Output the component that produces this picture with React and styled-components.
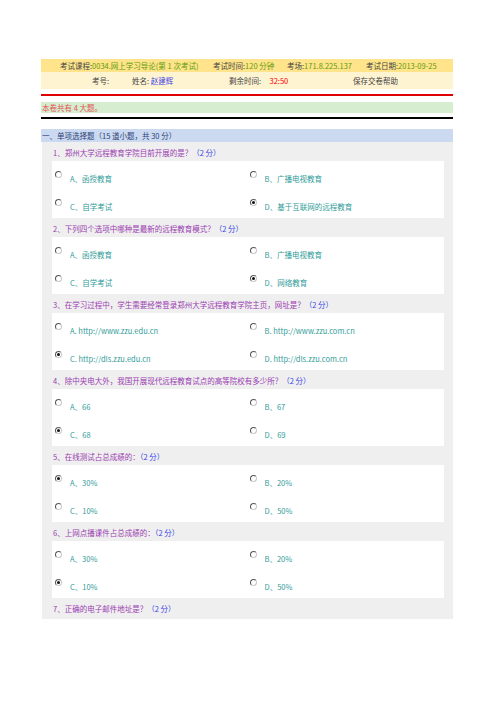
//IMPORTS
import React from 'react'
import styled, { createGlobalStyle } from 'styled-components'

//STYLE
const Global = createGlobalStyle`
  body {
    margin: 0;
    background: #fff;
    font-family: "Noto Sans CJK SC", "Noto Sans", sans-serif;
    font-size: 7.5px;
  }
`

const Page = styled.div`
  width: 412px;
  margin-left: 41px;
  padding-top: 59px;
`

const InfoRow = styled.div`
  display: grid;
  grid-template-columns: ${p => p.$cols};
  align-items: center;
  height: ${p => p.$h}px;
  padding-left: ${p => p.$pad}px;
  background: ${p => p.$bg};
  color: #444;
  line-height: 10px;
  white-space: nowrap;
`

const Val = styled.span`
  color: ${p => p.$color};
`

const Rule = styled.div`
  height: 2px;
  background: ${p => p.$color};
  margin: ${p => p.$m};
`

const Notice = styled.div`
  height: 11px;
  line-height: 11px;
  background: #d6edd0;
  color: #e25555;
  padding-left: 1px;
`

const SectionHead = styled.div`
  height: 13px;
  line-height: 13px;
  background: #cbdaf0;
  color: #2f3f78;
  padding-left: 1px;
`

const Body = styled.div`
  background: #efefef;
  margin-left: 1px;
  padding: 0 9px 2px 10px;
`

const QTitle = styled.div`
  height: 19px;
  box-sizing: border-box;
  padding: 6px 0 0 1px;
  line-height: 10px;
  color: #9b3db2;
`

const Score = styled.span`
  color: #3a45e8;
`

const Options = styled.div`
  background: #fff;
  display: grid;
  grid-template-columns: 1fr 1fr;
  row-gap: 15px;
  padding: 10px 0 6px 3px;
`

const Option = styled.div`
  display: flex;
  align-items: flex-start;
  gap: 8px;
  color: #2f9b98;
  line-height: 10px;
`

const Radio = styled.span`
  position: relative;
  width: 5px;
  height: 5px;
  border: 1px solid;
  border-color: #555 #c8c8c8 #c8c8c8 #555;
  border-radius: 50%;
  background: #fff;
  flex: none;

  &::after {
    content: '';
    display: ${p => (p.$checked ? 'block' : 'none')};
    position: absolute;
    left: 1px;
    top: 1px;
    width: 3px;
    height: 3px;
    border-radius: 50%;
    background: #111;
  }
`

const Label = styled.span`
  margin-top: 3px;
`

//DATA
const questions = [
  {
    t: '1、郑州大学远程教育学院目前开展的是？',
    o: ['A、函授教育', 'B、广播电视教育', 'C、自学考试', 'D、基于互联网的远程教育'],
    c: 3,
  },
  {
    t: '2、下列四个选项中哪种是最新的远程教育模式？',
    o: ['A、函授教育', 'B、广播电视教育', 'C、自学考试', 'D、网络教育'],
    c: 3,
  },
  {
    t: '3、在学习过程中，学生需要经常登录郑州大学远程教育学院主页，网址是？',
    o: ['A. http://www.zzu.edu.cn', 'B. http://www.zzu.com.cn', 'C. http://dls.zzu.edu.cn', 'D. http://dls.zzu.com.cn'],
    c: 2,
  },
  {
    t: '4、除中央电大外，我国开展现代远程教育试点的高等院校有多少所？',
    o: ['A、66', 'B、67', 'C、68', 'D、69'],
    c: 2,
  },
  {
    t: '5、在线测试占总成绩的：',
    o: ['A、30%', 'B、20%', 'C、10%', 'D、50%'],
    c: 0,
  },
  {
    t: '6、上网点播课件占总成绩的：',
    o: ['A、30%', 'B、20%', 'C、10%', 'D、50%'],
    c: 2,
  },
  { t: '7、正确的电子邮件地址是？', o: [] },
]

//MAIN COMPONENT
const App = () => {
  const green = '#5f9c0a'

  return (
    <Page>
      <Global />

      <InfoRow $bg="#ffe48b" $h={13} $pad={19} $cols="153px 74px 79px auto">
        <span>考试课程:<Val $color={green}>0034.网上学习导论(第 1 次考试)</Val></span>
        <span>考试时间:<Val $color={green}>120 分钟</Val></span>
        <span>考场:<Val $color={green}>171.8.225.137</Val></span>
        <span>考试日期:<Val $color={green}>2013-09-25</Val></span>
      </InfoRow>
      <InfoRow $bg="#fff4d2" $h={17} $pad={51} $cols="40px 97px 124px auto">
        <span>考号:</span>
        <span>姓名: <Val $color="#4444e8">赵建辉</Val></span>
        <span>剩余时间: <Val $color="#ff0000">&nbsp;&nbsp;&nbsp;&nbsp;32:50</Val></span>
        <span>保存交卷帮助</span>
      </InfoRow>

      <Rule $color="#e00000" $m="5px 0 6px" />
      <Notice>本卷共有 4 大题。</Notice>
      <Rule $color="#000" $m="4px 0 10px" />

      <SectionHead>一、单项选择题（15 道小题，共 30 分）</SectionHead>
      <Body>
        {questions.map((q, i) => (
          <div key={i}>
            <QTitle>
              {q.t}<Score>（2 分）</Score>
            </QTitle>
            {q.o.length > 0 && (
              <Options>
                {q.o.map((o, j) => (
                  <Option key={j}>
                    <Radio $checked={j === q.c} />
                    <Label>{o}</Label>
                  </Option>
                ))}
              </Options>
            )}
          </div>
        ))}
      </Body>
    </Page>
  )
}
export default App
